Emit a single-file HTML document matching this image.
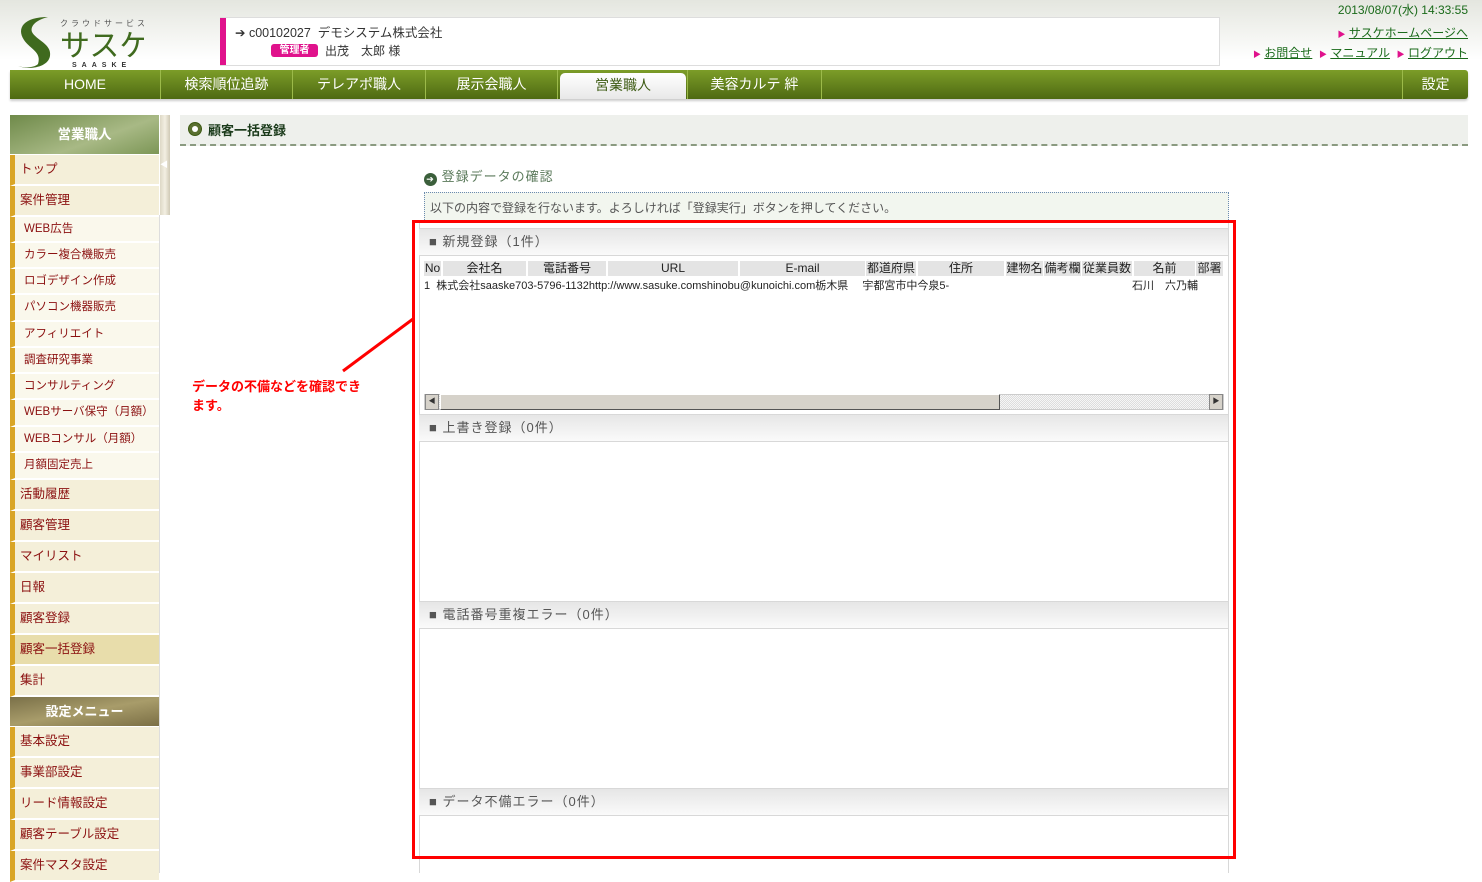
<!DOCTYPE html>
<html><head><meta charset="utf-8">
<style>
*{margin:0;padding:0;box-sizing:border-box}
body{width:1482px;height:873px;overflow:hidden;background:#fff;font-family:"Liberation Sans","Noto Sans CJK JP",sans-serif;font-size:12px;color:#333;position:relative}
.a{position:absolute}
.hdr{left:0;top:0;width:1482px;height:70px;background:linear-gradient(#e4e6df,#fff 60px)}
.nav{left:10px;top:70px;width:1458px;height:29px;background:linear-gradient(#7c9d28,#4e6912);border-radius:0 3px 3px 0;box-shadow:0 2px 2px #ccc}
.nav span{position:absolute;top:0;height:29px;line-height:29px;color:#fff;font-size:14px;text-align:center;border-right:1px solid #9cba4a}
.it{position:absolute;left:10px;width:149px;border-left:5px solid #d9a526;background:#f4efd9;color:#8b1010;padding-left:5px;font-size:12.5px;border-bottom:2px solid #fff}
.sub{background:#faf8ec;padding-left:9px;font-size:11.5px}
.sh{position:absolute;left:419px;width:809px;height:28px;background:linear-gradient(#e6e6e6,#fafafa);border-top:1px solid #d8d8d8;border-bottom:1px solid #d8d8d8;color:#555;font-size:13px;line-height:26px;padding-left:10px;letter-spacing:1px}
.th{position:absolute;top:261px;height:15px;background:#e4e4e4;font-size:12px;line-height:15px;text-align:center;color:#222}
</style></head><body>
<div class="a hdr"></div>
<svg class="a" style="left:14px;top:14px" width="130" height="56">
<path d="M34 3 C10 3 2 14 10 26 C16 35 28 38 24 50 C20 54 10 54 4 52 C14 56 34 54 36 42 C38 30 22 26 18 18 C16 12 22 6 34 3Z" fill="#3f6a1e"/>
<text x="46" y="12" font-size="8" fill="#555" letter-spacing="3">クラウドサービス</text>
<text x="46" y="42" font-size="30" fill="#3f6a1e" font-family="Noto Sans CJK JP">サスケ</text>
<text x="58" y="53" font-size="7" fill="#333" letter-spacing="5" font-weight="bold">SAASKE</text>
</svg>
<div class="a" style="left:220px;top:17px;width:1000px;height:49px;background:#fff;border:1px solid #ddd"></div>
<div class="a" style="left:220px;top:18px;width:6px;height:47px;background:#e0128c"></div>
<div class="a" style="left:235px;top:22px;font-size:12.5px;color:#333">➔ c00102027&nbsp; デモシステム株式会社</div>
<div class="a" style="left:271px;top:44px;width:47px;height:13px;background:#e0128c;border-radius:3px;color:#fff;font-size:10px;font-weight:bold;text-align:center;line-height:13px">管理者</div>
<div class="a" style="left:325px;top:42px;font-size:12px">出茂　太郎 様</div>
<div class="a" style="right:14px;top:1px;color:#1a6a1a;font-size:12px">2013/08/07(水) 14:33:55</div>
<div class="a" style="right:14px;top:24px;font-size:12px;color:#1a6a1a"><span style="color:#e0128c;font-size:8px">▶</span> <u>サスケホームページへ</u></div>
<div class="a" style="right:14px;top:44px;font-size:12px;color:#1a6a1a"><span style="color:#e0128c;font-size:8px">▶</span> <u>お問合せ</u>&nbsp; <span style="color:#e0128c;font-size:8px">▶</span> <u>マニュアル</u>&nbsp; <span style="color:#e0128c;font-size:8px">▶</span> <u>ログアウト</u></div>
<div class="a nav">
<span style="left:0;width:151px">HOME</span>
<span style="left:151px;width:132px">検索順位追跡</span>
<span style="left:283px;width:133px">テレアポ職人</span>
<span style="left:416px;width:132px">展示会職人</span>
<span style="left:550px;top:3px;height:26px;line-height:24px;width:126px;background:linear-gradient(#fff,#e8e8e8);color:#3c5a12;border-radius:5px 5px 0 0;border:none">営業職人</span>
<span style="left:677px;width:135px;border-left:1px solid #9cba4a">美容カルテ 絆</span>
<span style="left:1392px;width:66px;border-right:none;border-left:1px solid #9cba4a">設定</span>
</div>
<div class="a" style="left:10px;top:115px;width:149px;height:39px;background:linear-gradient(160deg,#6f8a4a,#a8b985 60%,#7c9656);color:#fff;font-weight:bold;font-size:13.5px;text-align:center;line-height:39px">営業職人</div>
<div class="a" style="left:160px;top:115px;width:10px;height:100px;background:linear-gradient(90deg,#ddd8c6,#f3efe2,#cfc9b5);color:#fff;font-size:8px;line-height:100px">◀</div>
<div class="it" style="top:155px;height:31px;line-height:29px">トップ</div>
<div class="it" style="top:186px;height:31px;line-height:29px">案件管理</div>
<div class="it sub" style="top:217px;height:26px;line-height:24px">WEB広告</div>
<div class="it sub" style="top:243px;height:26px;line-height:24px">カラー複合機販売</div>
<div class="it sub" style="top:269px;height:26px;line-height:24px">ロゴデザイン作成</div>
<div class="it sub" style="top:295px;height:27px;line-height:25px">パソコン機器販売</div>
<div class="it sub" style="top:322px;height:26px;line-height:24px">アフィリエイト</div>
<div class="it sub" style="top:348px;height:26px;line-height:24px">調査研究事業</div>
<div class="it sub" style="top:374px;height:26px;line-height:24px">コンサルティング</div>
<div class="it sub" style="top:400px;height:27px;line-height:25px">WEBサーバ保守（月額）</div>
<div class="it sub" style="top:427px;height:26px;line-height:24px">WEBコンサル（月額）</div>
<div class="it sub" style="top:453px;height:27px;line-height:25px">月額固定売上</div>
<div class="it" style="top:480px;height:31px;line-height:29px">活動履歴</div>
<div class="it" style="top:511px;height:31px;line-height:29px">顧客管理</div>
<div class="it" style="top:542px;height:31px;line-height:29px">マイリスト</div>
<div class="it" style="top:573px;height:31px;line-height:29px">日報</div>
<div class="it" style="top:604px;height:31px;line-height:29px">顧客登録</div>
<div class="it" style="top:635px;height:31px;line-height:29px;background:#e8ddab">顧客一括登録</div>
<div class="it" style="top:666px;height:31px;line-height:29px">集計</div>
<div class="a" style="left:10px;top:697px;width:149px;height:29px;background:linear-gradient(170deg,#7a7048,#a89c6a 50%,#7b6f45);color:#fff;font-weight:bold;font-size:13px;text-align:center;line-height:29px">設定メニュー</div>
<div class="it" style="top:727px;height:31px;line-height:29px">基本設定</div>
<div class="it" style="top:758px;height:31px;line-height:29px">事業部設定</div>
<div class="it" style="top:789px;height:31px;line-height:29px">リード情報設定</div>
<div class="it" style="top:820px;height:31px;line-height:29px">顧客テーブル設定</div>
<div class="it" style="top:851px;height:31px;line-height:29px">案件マスタ設定</div>
<div class="a" style="left:159px;top:215px;width:1px;height:658px;background:#ddd"></div>
<div class="a" style="left:180px;top:115px;width:1288px;height:31px;background:#eef0ec;border-bottom:2px dashed #8a9a80"></div>
<div class="a" style="left:188px;top:122px;width:14px;height:14px;border-radius:50%;background:#5a7030;border:1px solid #3c5a12"><div style="margin:3px;width:6px;height:6px;border-radius:50%;background:#fff"></div></div>
<div class="a" style="left:208px;top:120px;font-size:13px;color:#1a3a1a;font-weight:bold">顧客一括登録</div>
<div class="a" style="left:424px;top:166px;font-size:13px;color:#5b7a5b;letter-spacing:1px"><span style="display:inline-block;width:13px;height:13px;border-radius:50%;background:#3b5f3b;color:#fff;font-size:9px;text-align:center;line-height:13px;vertical-align:-1px">➔</span> 登録データの確認</div>
<div class="a" style="left:424px;top:192px;width:805px;height:30px;background:#f2f6ef;border-top:1px dotted #6b8ab0;border-left:1px dotted #6b8ab0;border-right:1px dotted #6b8ab0;font-size:12px;color:#555;padding:6px 5px">以下の内容で登録を行ないます。よろしければ「登録実行」ボタンを押してください。</div>
<div class="a" style="left:419px;top:222px;width:810px;height:651px;border-left:1px solid #d8d8d8;border-right:1px solid #d8d8d8"></div>
<div class="sh" style="top:228px">■ 新規登録（1件）</div>
<div class="th" style="left:424px;width:17px">No</div>
<div class="th" style="left:443px;width:83px">会社名</div>
<div class="th" style="left:528px;width:78px">電話番号</div>
<div class="th" style="left:608px;width:130px">URL</div>
<div class="th" style="left:740px;width:125px">E-mail</div>
<div class="th" style="left:866px;width:50px">都道府県</div>
<div class="th" style="left:918px;width:86px">住所</div>
<div class="th" style="left:1006px;width:37px">建物名</div>
<div class="th" style="left:1044px;width:37px">備考欄</div>
<div class="th" style="left:1082px;width:50px">従業員数</div>
<div class="th" style="left:1134px;width:61px">名前</div>
<div class="th" style="left:1196px;width:27px">部署</div>
<div class="a" style="left:424px;top:277px;font-size:11px;color:#222;white-space:nowrap">1&nbsp;&nbsp;株式会社saaske703-5796-1132http://www.sasuke.comshinobu@kunoichi.com栃木県　 宇都宮市中今泉5-</div>
<div class="a" style="left:1132px;top:277px;font-size:11px;color:#222">石川　六乃輔</div>
<div class="a" style="left:424px;top:394px;width:800px;height:16px;background:repeating-conic-gradient(#ddd 0 25%,#f6f6f6 0 50%) 0 0/2px 2px;border:1px solid #ccc"></div>
<div class="a" style="left:425px;top:394px;width:14px;height:16px;background:#d6d2ca;border:1px solid #888;font-size:7px;text-align:center;line-height:14px">◀</div>
<div class="a" style="left:440px;top:394px;width:560px;height:16px;background:#d6d2ca;border:1px solid #fff;border-right-color:#555;border-bottom-color:#555"></div>
<div class="a" style="left:1209px;top:394px;width:14px;height:16px;background:#d6d2ca;border:1px solid #888;font-size:7px;text-align:center;line-height:14px">▶</div>
<div class="sh" style="top:414px">■ 上書き登録（0件）</div>
<div class="sh" style="top:601px">■ 電話番号重複エラー（0件）</div>
<div class="sh" style="top:788px">■ データ不備エラー（0件）</div>
<div class="a" style="left:412px;top:220px;width:824px;height:639px;border:3px solid #f00"></div>
<svg class="a" style="left:330px;top:310px" width="90" height="70"><line x1="13" y1="61" x2="83" y2="9" stroke="#f00" stroke-width="3"/></svg>
<div class="a" style="left:192px;top:377px;color:#f00;font-weight:bold;font-size:13px;line-height:19px;width:182px">データの不備などを確認でき<br>ます。</div>
</body></html>
